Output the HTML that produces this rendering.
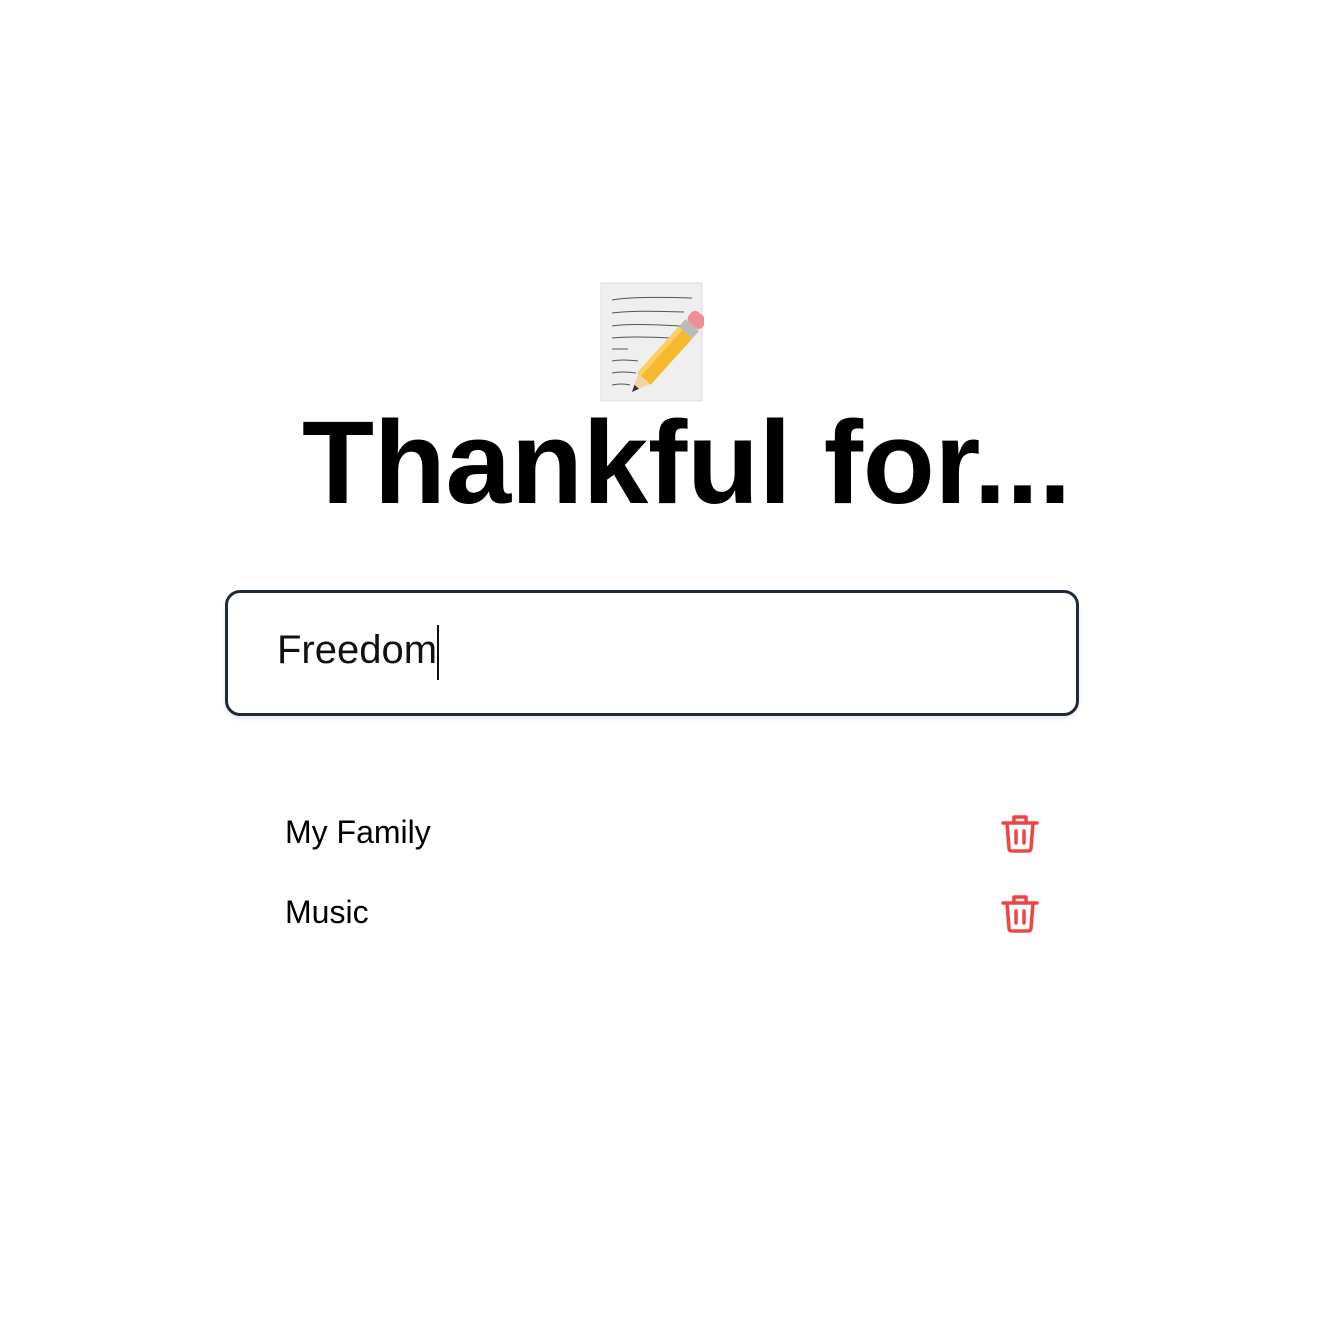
<!DOCTYPE html>
<html><head><meta charset="utf-8"><style>
body{margin:0;width:1326px;height:1318px;background:#fff;font-family:"Liberation Sans",sans-serif;position:relative;overflow:hidden}
.a{position:absolute}
h1{position:absolute;left:302px;top:398px;margin:0;font-size:118px;font-weight:bold;letter-spacing:-0.3px;line-height:130px;color:#000;white-space:nowrap}
.box{left:225px;top:590px;width:848px;height:120px;border:3px solid #1f2937;border-radius:15px;box-shadow:0 3px 4px rgba(0,0,0,.08)}
.in{left:277px;top:627px;font-size:40px;line-height:46px;color:#111}
.caret{left:437px;top:625px;width:2px;height:55px;background:#111}
.li{left:285px;font-size:32px;line-height:36px;color:#000}
</style></head><body>
<svg class="a" style="left:600px;top:282px" width="104" height="120" viewBox="0 0 104 120">
<rect x="1" y="1" width="101" height="118" fill="#efefef" stroke="#ddd"/>
<g stroke="#555" stroke-width="1" fill="none">
<path d="M12 18q20-4 80-2M12 31q20-3 72-1M12 44q20-3 68 0M12 56q22-2 60 0M12 67h16M12 79q10-2 26 0M12 91q10-2 24 0M12 103q10-2 18 0"/></g>
<g transform="translate(32 110) rotate(-48)">
<polygon points="0,0 18,-8 18,8" fill="#f3d3a0"/>
<polygon points="0,0 7,-3 7,3" fill="#333"/>
<rect x="18" y="-9" width="62" height="18" fill="#f5b82e"/>
<rect x="18" y="-9" width="62" height="5" fill="#fad063"/>
<rect x="80" y="-9" width="10" height="18" fill="#bbb"/>
<rect x="90" y="-9" width="14" height="18" rx="5" fill="#ef8f93"/>
</g></svg>
<h1>Thankful for...</h1>
<div class="a box"></div>
<div class="a in">Freedom</div>
<div class="a caret"></div>
<div class="a li" style="top:814px">My Family</div>
<div class="a li" style="top:894px">Music</div>
<svg class="a" style="left:1000px;top:812px" width="40" height="42" viewBox="0 0 40 42" fill="none" stroke="#ef4444" stroke-width="3.5" stroke-linecap="round" stroke-linejoin="round"><path d="M3 11h34M14 11V5h12v6M7 11l2 25q0 3 3 3h16q3 0 3-3l2-25M16 19v12M24 19v12"/></svg>
<svg class="a" style="left:1000px;top:892px" width="40" height="42" viewBox="0 0 40 42" fill="none" stroke="#ef4444" stroke-width="3.5" stroke-linecap="round" stroke-linejoin="round"><path d="M3 11h34M14 11V5h12v6M7 11l2 25q0 3 3 3h16q3 0 3-3l2-25M16 19v12M24 19v12"/></svg>
</body></html>
